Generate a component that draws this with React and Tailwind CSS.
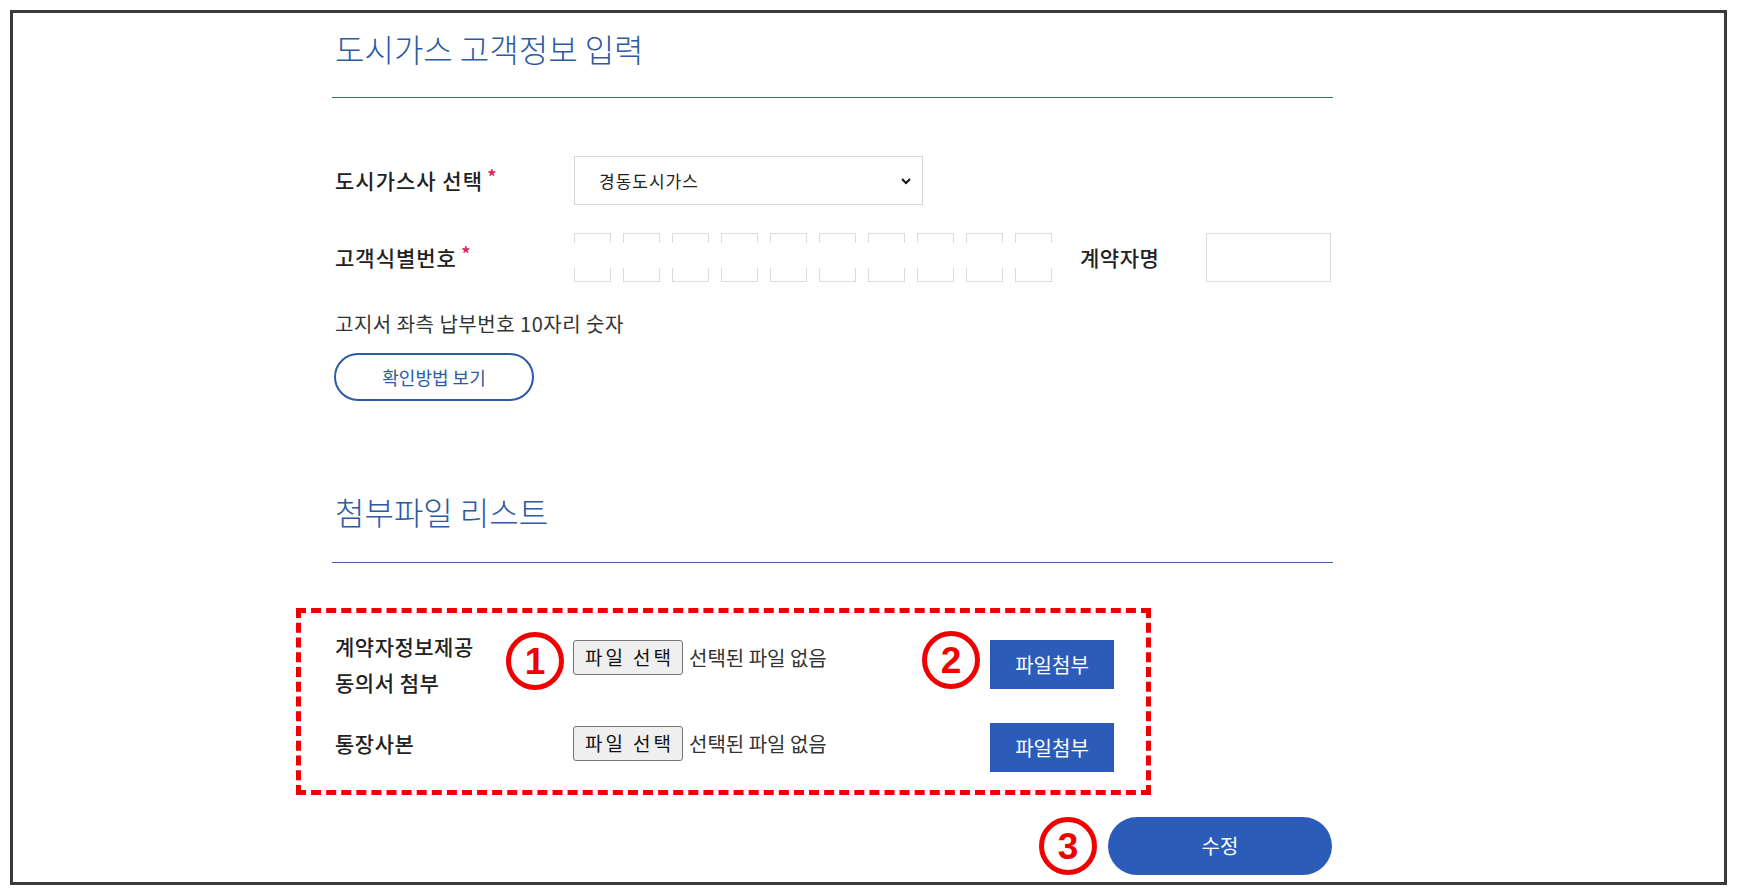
import React from 'react';

const KR = "font-['Noto_Sans_CJK_KR',sans-serif]";

function Circled({ n, className = '' }) {
  return (
    <div className={`w-[58px] h-[58px] rounded-full border-[5px] border-[#f00000] bg-white flex items-center justify-center ${className}`}>
      <span className="font-['Liberation_Sans',sans-serif] font-bold text-[37px] leading-none text-[#f00000]">{n}</span>
    </div>
  );
}

function DigitBox() {
  // side borders fade out in the middle, as in the picture
  return (
    <div className="w-[37px] h-[49px] flex flex-col">
      <div className="h-[10px] border-t border-x border-[#dcdcdc]" />
      <div className="h-[25px]" />
      <div className="h-[14px] border-b border-x border-[#dcdcdc]" />
    </div>
  );
}

function FilePicker() {
  return (
    <div className="flex items-center">
      <div className="w-[110px] h-[35px] bg-[#efefef] border border-[#767676] rounded-[3px] flex items-center justify-center text-[19px] tracking-[3px] pl-[3px] text-[#111]">파일 선택</div>
      <span className="ml-[6px] text-[20px] text-[#333]">선택된 파일 없음</span>
    </div>
  );
}

function Required() {
  return <span className="ml-[4px] text-[#e3185b] text-[20px] relative -top-[4px]">*</span>;
}

export default function App() {
  return (
    <div className={`w-[1737px] h-[896px] bg-white pl-[10px] pt-[10px] ${KR}`}>
      <div className="w-[1717px] h-[875px] border-[3px] border-[#3a3a3a] bg-white overflow-hidden">
        <div className="ml-[319px] w-[1001px]">
          {/* 고객정보 */}
          <div className="pt-[13px] pb-[27px] border-b border-[#3b62a3]">
            <h2 className="pl-[3px] text-[32px] leading-[44px] font-light text-[#2c5aa5]">도시가스 고객정보 입력</h2>
          </div>

          <div className="mt-[58px] flex items-center">
            <div className="w-[242px] pl-[3px] text-[21px] tracking-[1px] font-medium text-[#222]">도시가스사 선택<Required /></div>
            <div className="w-[349px] h-[49px] border border-[#d6d6d6] flex items-center justify-between pl-[24px] pr-[10px]">
              <span className="text-[17px] tracking-[1px] text-[#222]">경동도시가스</span>
              <svg width="12" height="12" viewBox="0 0 12 12"><path d="M2 4 L6 8 L10 4" fill="none" stroke="#111" strokeWidth="2" /></svg>
            </div>
          </div>

          <div className="mt-[28px] flex items-center">
            <div className="w-[242px] pl-[3px] text-[21px] tracking-[1px] font-medium text-[#222]">고객식별번호<Required /></div>
            <div className="flex gap-[12px]">
              {Array.from({ length: 10 }).map((_, i) => <DigitBox key={i} />)}
            </div>
            <div className="ml-[28px] w-[126px] text-[21px] tracking-[0.5px] font-medium text-[#222]">계약자명</div>
            <div className="w-[125px] h-[49px] border border-[#dcdcdc]" />
          </div>

          <p className="mt-[30px] pl-[3px] text-[20px] tracking-[0.5px] leading-[24px] text-[#333]">고지서 좌측 납부번호 10자리 숫자</p>
          <button className="mt-[17px] ml-[2px] w-[200px] h-[48px] rounded-full border-2 border-[#2c5aa5] text-[18px] text-[#2c5aa5] bg-white">확인방법 보기</button>

          {/* 첨부파일 */}
          <div className="mt-[88px] pb-[29px] border-b border-[#3b62a3]">
            <h2 className="pl-[3px] text-[32px] leading-[44px] font-light text-[#2c5aa5]">첨부파일 리스트</h2>
          </div>

          <div className="mt-[45px] ml-[-36px] w-[855px] border-[5px] border-dashed border-[#f00000] pl-[34px] pt-[15px] pb-[18px]">
            <div className="relative flex items-start">
              <div className="w-[238px] text-[21px] tracking-[0.5px] leading-[36px] font-medium text-[#222]">계약자정보제공<br />동의서 첨부</div>
              <div className="w-[417px] mt-[12px]"><FilePicker /></div>
              <button className="mt-[12px] w-[124px] h-[49px] bg-[#2b5cba] text-white text-[20px]">파일첨부</button>
              <Circled n="1" className="absolute left-[171px] top-[4px]" />
              <Circled n="2" className="absolute left-[587px] top-[3px]" />
            </div>
            <div className="mt-[23px] flex items-start">
              <div className="w-[238px] mt-[2px] text-[21px] tracking-[0.5px] leading-[36px] font-medium text-[#222]">통장사본</div>
              <div className="w-[417px] mt-[3px]"><FilePicker /></div>
              <button className="w-[124px] h-[49px] bg-[#2b5cba] text-white text-[20px]">파일첨부</button>
            </div>
          </div>

          <div className="mt-[22px] flex items-center justify-end gap-[11px] pr-[1px]">
            <Circled n="3" />
            <button className="w-[224px] h-[58px] rounded-full bg-[#2b5cba] text-white text-[20px]">수정</button>
          </div>
        </div>
      </div>
    </div>
  );
}
